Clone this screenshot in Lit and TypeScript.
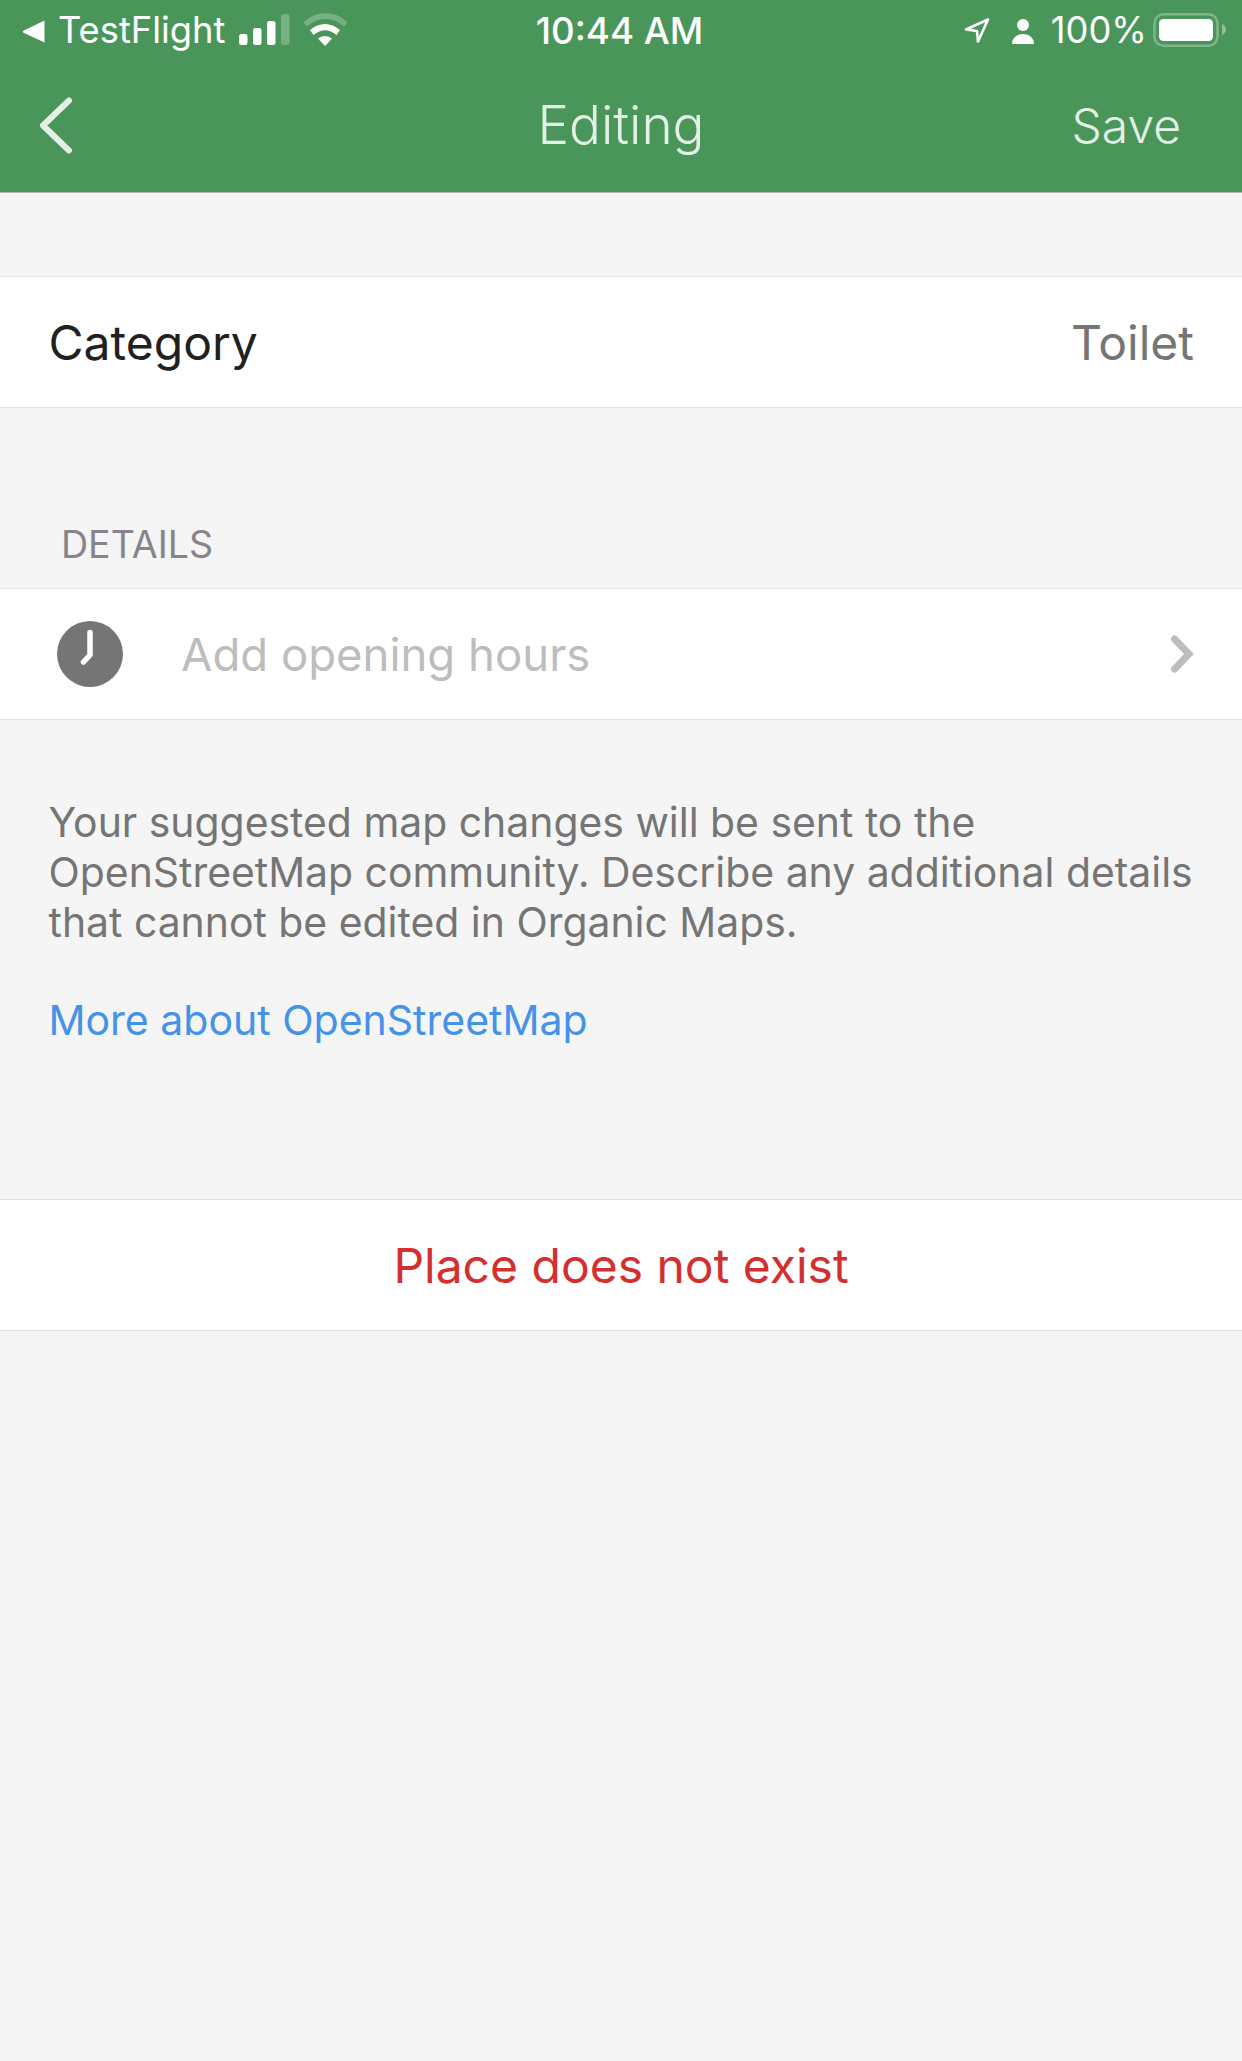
import { LitElement, html, css } from 'lit';
import { customElement } from 'lit/decorators.js';

@customElement('app-root')
export class AppRoot extends LitElement {
  static styles = css`
    :host {
      display: block;
      height: 2061px;
      background: #f5f5f5;
      font-family: Inter, "Liberation Sans", sans-serif;
      overflow: hidden;
    }
    .top {
      background: #4a965a;
      height: 192px;
      border-bottom: 1px solid #b5b5b5;
      color: #fff;
    }
    .status {
      height: 60px;
      display: grid;
      grid-template-columns: 1fr auto 1fr;
      align-items: center;
      padding: 0 15px 0 22px;
      font-size: 36.3px;
      font-weight: 400;
    }
    .status-left, .status-right {
      display: flex;
      align-items: center;
    }
    .status-right { justify-content: flex-end; }
    .status svg { flex: none; display: block; }
    .carrier { margin-left: 12px; }
    .signal { margin-left: 14px; }
    .wifi { margin-left: 12px; }
    .person { margin-left: 20px; }
    .percent { margin-left: 16px; }
    .battery { margin-left: 6px; }
    .time { font-weight: 500; font-size: 36.700px; margin-right: 10px; }
    .nav {
      height: 130px;
      padding: 0 38px 2px;
      display: grid;
      grid-template-columns: 1fr auto 1fr;
      align-items: center;
      color: #e3f0e6;
    }
    .nav svg { display: block; }
    .title { font-size: 53px; font-weight: 300; }
    .save { justify-self: end; margin-right: 23px; font-size: 48px; font-weight: 300; }
    .row {
      background: #fff;
      height: 130px;
      border-top: 1px solid #e2e2e2;
      border-bottom: 1px solid #e2e2e2;
      display: flex;
      align-items: center;
      font-size: 48px;
    }
    .category {
      margin-top: 83px;
      padding: 0 48px 0 48.500px;
      justify-content: space-between;
      color: #212121;
    }
    .category .value { color: #757575; }
    .label {
      margin: 105px 0 0 61px;
      height: 75px;
      font-size: 37.600px;
      line-height: 64px;
      color: #85858a;
    }
    .hours {
      padding: 0 48px 0 57px;
      color: #bdbdbd;
      font-size: 45.500px;
    }
    .hours .text { margin-left: 58px; flex: 1; }
    .note {
      margin: 77px 0 0 48.500px;
      font-size: 40.900px;
      line-height: 50px;
      color: #757575;
      white-space: nowrap;
    }
    .link {
      margin: 48px 0 0 48.500px;
      font-size: 41px;
      line-height: 50px;
      color: #4492ea;
    }
    .remove {
      margin-top: 154px;
      justify-content: center;
      color: #d32f2f;
    }
  `;

  render() {
    return html`
      <div class="top">
        <div class="status">
          <div class="status-left">
            <svg width="24" height="26" viewBox="0 0 24 26">
              <path d="M22.500 3.500V25.500L1.500 15.800q-1.500-1 0-2z" fill="#fff"></path>
            </svg>
            <span class="carrier">TestFlight</span>
            <svg class="signal" width="52" height="34" viewBox="0 0 52 34">
              <rect x="0" y="21" width="8.500" height="11" rx="2.500" fill="#fff"></rect>
              <rect x="14" y="15" width="8.500" height="17" rx="2.500" fill="#fff"></rect>
              <rect x="28" y="8" width="8.500" height="24" rx="2.500" fill="#fff"></rect>
              <rect x="42" y="1" width="8.500" height="31" rx="2.500" fill="#fff" opacity=".25"></rect>
            </svg>
            <svg class="wifi" width="46" height="34" viewBox="0 0 46 34">
              <path d="M.5 9.500C12-3 33-3 44.500 9.500L41 13.500C30.500 3.500 14.500 3.500 4 13.500z" fill="#fff" opacity=".25"></path>
              <path d="M7 17C16 9 28 9 37 17L33.500 22C26 15.500 18 15.500 10.500 22z" fill="#fff"></path>
              <path d="M15 25.500C19.500 22 24.500 22 29 25.500L22 33z" fill="#fff"></path>
            </svg>
          </div>
          <div class="time">10:44 AM</div>
          <div class="status-right">
            <svg width="28" height="28" viewBox="0 0 28 28">
              <path d="M25 3.500L3 13.500l11 1.500 1 10.500z" fill="none" stroke="#fff" stroke-width="2.600" stroke-linejoin="round"></path>
            </svg>
            <svg class="person" width="24" height="30" viewBox="0 0 24 30">
              <circle cx="12" cy="10" r="6" fill="#fff"></circle>
              <path d="M1 29c0-6 5-10 11-10s11 4 11 10z" fill="#fff"></path>
            </svg>
            <span class="percent">100%</span>
            <svg class="battery" width="74" height="36" viewBox="0 0 74 36">
              <rect x="1.500" y="2.200" width="63" height="31.600" rx="9" fill="none" stroke="#fff" stroke-opacity=".3" stroke-width="2.500"></rect>
              <rect x="6" y="7" width="54" height="22" rx="4.500" fill="#fff"></rect>
              <path d="M69 12c2.500 1 4 3 4 5.500s-1.500 4.500-4 5.500z" fill="#fff" opacity=".4"></path>
            </svg>
          </div>
        </div>
        <div class="nav">
          <svg width="36" height="60" viewBox="0 0 36 60">
            <path d="M31 5.500L5 30.500l26 25" fill="none" stroke="#e3f0e6" stroke-width="6" stroke-linecap="round" stroke-linejoin="round"></path>
          </svg>
          <div class="title">Editing</div>
          <div class="save">Save</div>
        </div>
      </div>
      <div class="row category"><span>Category</span><span class="value">Toilet</span></div>
      <div class="label">DETAILS</div>
      <div class="row hours">
        <svg width="66" height="66" viewBox="0 0 66 66">
          <circle cx="33" cy="33" r="33" fill="#757575"></circle>
          <path d="M33 11.500V34L26.500 41" fill="none" stroke="#fff" stroke-width="5.500" stroke-linecap="round" stroke-linejoin="round"></path>
        </svg>
        <span class="text">Add opening hours</span>
        <svg width="26" height="38" viewBox="0 0 26 38">
          <path d="M6.500 4L21 19L6.500 34" fill="none" stroke="#bdbdbd" stroke-width="7" stroke-linecap="round"></path>
        </svg>
      </div>
      <div class="note">Your suggested map changes will be sent to the<br>OpenStreetMap community. Describe any additional details<br>that cannot be edited in Organic Maps.</div>
      <div class="link">More about OpenStreetMap</div>
      <div class="row remove">Place does not exist</div>
    `;
  }
}
